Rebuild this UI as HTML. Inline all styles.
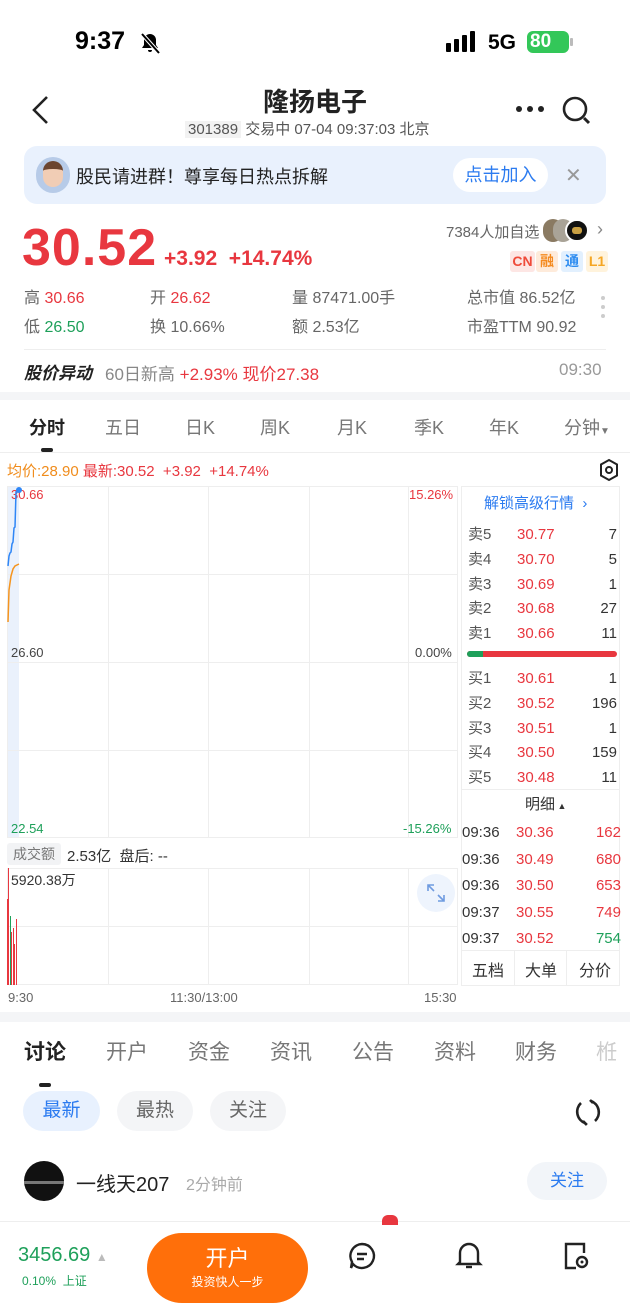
<!DOCTYPE html>
<html><head><meta charset="utf-8"><style>
*{margin:0;padding:0;box-sizing:border-box}
body{width:630px;height:1280px;overflow:hidden;background:#fff;font-family:"Liberation Sans","Noto Sans CJK SC",sans-serif;color:#222;position:relative}
.a{position:absolute;white-space:nowrap}
.r{color:#e8373f}.g{color:#1ea05a}.gy{color:#666}.lg{color:#999}
.hl{position:absolute;height:1px;background:#eee}
.vl{position:absolute;width:1px;background:#eee}
</style></head><body>
<!-- status bar -->
<div class="a" style="left:75px;top:27px;font-size:25px;font-weight:bold;color:#000">9:37</div>
<svg class="a" style="left:138px;top:31px" width="24" height="24" viewBox="0 0 24 24"><path d="M12 3a6 6 0 0 0-6 6v5l-2 3h16l-2-3V9a6 6 0 0 0-6-6z" fill="#000"/><path d="M10 19a2 2 0 0 0 4 0" fill="#000"/><path d="M4 3l17 19" stroke="#fff" stroke-width="4"/><path d="M4 3l17 19" stroke="#000" stroke-width="2"/></svg>
<div class="a" style="left:446px;top:43px;width:5px;height:9px;background:#000;border-radius:1px"></div>
<div class="a" style="left:454px;top:39px;width:5px;height:13px;background:#000;border-radius:1px"></div>
<div class="a" style="left:462px;top:35px;width:5px;height:17px;background:#000;border-radius:1px"></div>
<div class="a" style="left:470px;top:31px;width:5px;height:21px;background:#000;border-radius:1px"></div>
<div class="a" style="left:488px;top:31px;font-size:21px;font-weight:bold;color:#000">5G</div>
<div class="a" style="left:527px;top:31px;width:42px;height:22px;background:#33c759;border-radius:6px;color:#fff;font-weight:bold;font-size:19px;line-height:22px;padding-left:3px">80</div>
<div class="a" style="left:570px;top:38px;width:3px;height:8px;background:#bbb;border-radius:1px"></div>
<!-- nav -->
<svg class="a" style="left:28px;top:95px" width="24" height="30" viewBox="0 0 24 30"><path d="M19 2L6 15l13 13" stroke="#222" stroke-width="2.6" fill="none"/></svg>
<div class="a" style="left:0;width:630px;top:82px;text-align:center;font-size:26px;font-weight:bold;color:#222">隆扬电子</div>
<div class="a" style="left:185px;top:118px;font-size:15px;color:#555"><span style="background:#f2f2f2;padding:0 3px">301389</span> 交易中 07-04 09:37:03 北京</div>
<div class="a" style="left:516px;top:106px;width:6px;height:6px;border-radius:3px;background:#222;box-shadow:11px 0 #222,22px 0 #222"></div>
<svg class="a" style="left:561px;top:95px" width="32" height="32" viewBox="0 0 32 32"><circle cx="14" cy="14" r="11" stroke="#222" stroke-width="2.6" fill="none"/><path d="M23 23l5 5" stroke="#222" stroke-width="3"/></svg>
<!-- banner -->
<div class="a" style="left:24px;top:146px;width:582px;height:58px;background:#e9f1fd;border-radius:13px"></div>
<div class="a" style="left:36px;top:157px;width:34px;height:36px;border-radius:17px;background:#b7cbe8;overflow:hidden"><div style="margin:4px 7px;width:20px;height:26px;border-radius:10px;background:#f1cdb5;border-top:8px solid #6b4530"></div></div>
<div class="a" style="left:76px;top:163px;font-size:18px;color:#222">股民请进群！尊享每日热点拆解</div>
<div class="a" style="left:453px;top:158px;width:95px;height:34px;border-radius:17px;background:#fff;color:#2b7bf0;font-size:18px;line-height:34px;text-align:center">点击加入</div>
<div class="a" style="left:565px;top:163px;font-size:20px;color:#999">✕</div>
<!-- price -->
<div class="a r" style="left:22px;top:218px;font-size:52px;font-weight:bold;letter-spacing:1px">30.52</div>
<div class="a r" style="left:164px;top:247px;font-size:21px;font-weight:bold">+3.92 &nbsp;+14.74%</div>
<div class="a gy" style="left:446px;top:221px;font-size:15px">7384人加自选</div>
<div class="a" style="left:543px;top:219px;width:20px;height:23px;border-radius:11px;background:#8a7a62"></div>
<div class="a" style="left:553px;top:219px;width:20px;height:23px;border-radius:11px;background:#a9a397"></div>
<div class="a" style="left:565px;top:219px;width:24px;height:23px;border-radius:12px;background:#111;border:2px solid #fff"><div style="margin:6px auto;width:10px;height:7px;background:#c9a043;border-radius:3px"></div></div>
<div class="a" style="left:597px;top:219px;font-size:18px;color:#888">›</div>
<div class="a" style="left:510px;top:251px;width:25px;height:21px;background:#fde6e4;color:#ef4b3a;font-size:14px;font-weight:bold;text-align:center;line-height:21px;border-radius:3px">CN</div>
<div class="a" style="left:536px;top:251px;width:22px;height:21px;background:#feebdb;color:#f48a1f;font-size:14px;font-weight:bold;text-align:center;line-height:21px;border-radius:3px">融</div>
<div class="a" style="left:561px;top:251px;width:22px;height:21px;background:#e2f0fe;color:#2d8cf0;font-size:14px;font-weight:bold;text-align:center;line-height:21px;border-radius:3px">通</div>
<div class="a" style="left:586px;top:251px;width:22px;height:21px;background:#fff3dc;color:#f5a623;font-size:14px;font-weight:bold;text-align:center;line-height:21px;border-radius:3px">L1</div>
<div class="a" style="left:24px;top:284px;font-size:16px;line-height:29px;color:#666">高 <span class="r">30.66</span><br>低 <span class="g">26.50</span></div>
<div class="a" style="left:150px;top:284px;font-size:16px;line-height:29px;color:#666">开 <span class="r">26.62</span><br>换 10.66%</div>
<div class="a" style="left:292px;top:284px;font-size:16px;line-height:29px;color:#666">量 87471.00手<br>额 2.53亿</div>
<div class="a" style="left:467px;top:284px;font-size:16px;line-height:29px;color:#666">总市值 86.52亿<br>市盈TTM 90.92</div>
<div class="a" style="left:601px;top:296px;width:4px;height:4px;border-radius:2px;background:#ccc;box-shadow:0 9px #ccc,0 18px #ccc"></div>
<div class="hl" style="left:24px;top:349px;width:582px"></div>
<div class="a" style="left:24px;top:359px;font-size:17px;font-weight:bold;font-style:italic;color:#222">股价异动</div>
<div class="a" style="left:105px;top:360px;font-size:17px;color:#888">60日新高 <span class="r">+2.93% 现价27.38</span></div>
<div class="a lg" style="left:559px;top:360px;font-size:17px">09:30</div>
<div class="a" style="left:0;top:392px;width:630px;height:8px;background:#f4f5f7"></div>
<!-- chart tabs -->
<div class="a" style="top:414px;left:0;width:630px;font-size:18px;color:#777">
<span class="a" style="left:29px;color:#222;font-weight:bold">分时</span><span class="a" style="left:105px">五日</span><span class="a" style="left:185px">日K</span><span class="a" style="left:260px">周K</span><span class="a" style="left:337px">月K</span><span class="a" style="left:414px">季K</span><span class="a" style="left:489px">年K</span><span class="a" style="left:564px">分钟<span style="font-size:10px">▼</span></span></div>
<div class="a" style="left:41px;top:448px;width:12px;height:4px;border-radius:2px;background:#222"></div>
<div class="hl" style="left:0;top:452px;width:630px"></div>
<div class="a" style="left:7px;top:460px;font-size:15px"><span style="color:#f08c1c">均价:28.90</span> <span class="r">最新:30.52 &nbsp;+3.92 &nbsp;+14.74%</span></div>
<svg class="a" style="left:598px;top:458px" width="22" height="24" viewBox="0 0 22 24"><path d="M11 2l8 4.5v11L11 22l-8-4.5v-11z" stroke="#222" stroke-width="2" fill="none"/><circle cx="11" cy="12" r="3" stroke="#222" stroke-width="2" fill="none"/></svg>
<!-- chart -->
<div class="a" style="left:7px;top:486px;width:451px;height:352px;border:1px solid #eee"></div>
<div class="a" style="left:8px;top:487px;width:11px;height:350px;background:#eaf1fc"></div>
<div class="vl" style="left:108px;top:486px;height:352px"></div>
<div class="vl" style="left:208px;top:486px;height:352px"></div>
<div class="vl" style="left:309px;top:486px;height:352px"></div>
<div class="vl" style="left:408px;top:486px;height:352px"></div>
<div class="hl" style="left:7px;top:574px;width:451px"></div>
<div class="hl" style="left:7px;top:662px;width:451px"></div>
<div class="hl" style="left:7px;top:750px;width:451px"></div>
<div class="a r" style="left:11px;top:487px;font-size:13px">30.66</div>
<svg class="a" style="left:0;top:480px" width="30" height="150"><path d="M8 86 L9 76 L10 73 L11 72 L12 64 L13 62 L14 48 L15 47 L16 12 L17 12 L18 9 L19 9" stroke="#2f86f6" stroke-width="1.5" fill="none"/><path d="M8 142 L9 110 L11 96 L13 89 L15 86 L19 84" stroke="#f5941e" stroke-width="1.5" fill="none"/><circle cx="19" cy="10" r="3" fill="#2f86f6"/></svg>
<div class="a r" style="left:409px;top:487px;font-size:13px">15.26%</div>
<div class="a" style="left:11px;top:645px;font-size:13px;color:#444">26.60</div>
<div class="a" style="left:415px;top:645px;font-size:13px;color:#444">0.00%</div>
<div class="a g" style="left:11px;top:821px;font-size:13px">22.54</div>
<div class="a g" style="left:403px;top:821px;font-size:13px">-15.26%</div>
<!-- order book -->
<div class="a" style="left:461px;top:486px;width:159px;height:500px;border:1px solid #eee"></div>
<div class="a" style="left:484px;top:492px;font-size:15px;color:#2b7bf0">解锁高级行情 &nbsp;›</div>
<div class="a" style="left:468px;top:523px;font-size:15px;line-height:24.8px;color:#555">卖5<br>卖4<br>卖3<br>卖2<br>卖1</div>
<div class="a r" style="left:517px;top:523px;font-size:15px;line-height:24.8px">30.77<br>30.70<br>30.69<br>30.68<br>30.66</div>
<div class="a" style="left:560px;top:523px;width:57px;text-align:right;font-size:15px;line-height:24.8px;color:#333">7<br>5<br>1<br>27<br>11</div>
<div class="a" style="left:467px;top:651px;width:150px;height:6px;border-radius:3px;background:#e8373f"></div>
<div class="a" style="left:467px;top:651px;width:16px;height:6px;border-radius:3px 0 0 3px;background:#1ea05a"></div>
<div class="a" style="left:468px;top:667px;font-size:15px;line-height:24.8px;color:#555">买1<br>买2<br>买3<br>买4<br>买5</div>
<div class="a r" style="left:517px;top:667px;font-size:15px;line-height:24.8px">30.61<br>30.52<br>30.51<br>30.50<br>30.48</div>
<div class="a" style="left:560px;top:667px;width:57px;text-align:right;font-size:15px;line-height:24.8px;color:#333">1<br>196<br>1<br>159<br>11</div>
<div class="hl" style="left:461px;top:789px;width:159px"></div>
<div class="a" style="left:525px;top:793px;font-size:15px;color:#333">明细<span style="font-size:9px"> ▲</span></div>
<div class="a" style="left:462px;top:820px;font-size:15px;line-height:26.5px;color:#333">09:36<br>09:36<br>09:36<br>09:37<br>09:37</div>
<div class="a r" style="left:516px;top:820px;font-size:15px;line-height:26.5px">30.36<br>30.49<br>30.50<br>30.55<br>30.52</div>
<div class="a r" style="left:570px;top:820px;width:51px;text-align:right;font-size:15px;line-height:26.5px">162<br>680<br>653<br>749<br><span class="g">754</span></div>
<div class="hl" style="left:461px;top:950px;width:159px"></div>
<div class="vl" style="left:514px;top:950px;height:36px"></div>
<div class="vl" style="left:566px;top:950px;height:36px"></div>
<div class="a" style="left:461px;top:957px;width:159px;font-size:16px;color:#333"><span class="a" style="left:11px">五档</span><span class="a" style="left:64px">大单</span><span class="a" style="left:118px">分价</span></div>
<!-- volume -->
<div class="a" style="left:7px;top:843px;width:54px;height:22px;background:#f2f3f5;border-radius:3px;font-size:14px;color:#777;line-height:22px;text-align:center">成交额</div>
<div class="a" style="left:67px;top:845px;font-size:15px;color:#333">2.53亿 &nbsp;盘后: --</div>
<div class="a" style="left:7px;top:868px;width:451px;height:117px;border:1px solid #eee"></div>
<div class="vl" style="left:108px;top:868px;height:117px"></div>
<div class="vl" style="left:208px;top:868px;height:117px"></div>
<div class="vl" style="left:309px;top:868px;height:117px"></div>
<div class="vl" style="left:408px;top:868px;height:117px"></div>
<div class="hl" style="left:7px;top:926px;width:451px"></div>
<div class="a" style="left:8px;top:868px;width:1px;height:117px;background:#e8373f"></div>
<div class="a" style="left:7px;top:899px;width:1px;height:86px;background:#e8373f"></div>
<div class="a" style="left:10px;top:916px;width:1px;height:69px;background:#1ea05a"></div>
<div class="a" style="left:11px;top:932px;width:1px;height:53px;background:#e8373f"></div>
<div class="a" style="left:13px;top:928px;width:1px;height:57px;background:#e8373f"></div>
<div class="a" style="left:14px;top:944px;width:1px;height:41px;background:#e8373f"></div>
<div class="a" style="left:16px;top:919px;width:1px;height:66px;background:#e8373f"></div>
<div class="a" style="left:11px;top:870px;font-size:14px;color:#333">5920.38万</div>
<div class="a" style="left:417px;top:874px;width:38px;height:38px;border-radius:19px;background:#eef4fd"></div>
<svg class="a" style="left:424px;top:881px" width="24" height="24" viewBox="0 0 24 24"><path d="M4 10V4h6M4 4l6 6M20 14v6h-6M20 20l-6-6" stroke="#6f9be0" stroke-width="1.6" fill="none"/></svg>
<div class="a gy" style="left:8px;top:990px;font-size:13px">9:30</div>
<div class="a gy" style="left:170px;top:990px;font-size:13px">11:30/13:00</div>
<div class="a gy" style="left:424px;top:990px;font-size:13px">15:30</div>
<div class="a" style="left:0;top:1012px;width:630px;height:10px;background:#f4f5f7"></div>
<!-- discussion -->
<div class="a" style="top:1036px;left:0;width:630px;font-size:21px;color:#777">
<span class="a" style="left:24px;color:#222;font-weight:bold">讨论</span><span class="a" style="left:106px">开户</span><span class="a" style="left:188px">资金</span><span class="a" style="left:270px">资讯</span><span class="a" style="left:352px">公告</span><span class="a" style="left:434px">资料</span><span class="a" style="left:515px">财务</span><span class="a" style="left:596px;color:#ccc">栣</span></div>
<div class="a" style="left:39px;top:1083px;width:12px;height:4px;border-radius:2px;background:#222"></div>
<div class="a" style="left:23px;top:1091px;width:77px;height:40px;border-radius:20px;background:#e8f1fe;color:#2b7bf0;font-size:19px;line-height:40px;text-align:center">最新</div>
<div class="a" style="left:117px;top:1091px;width:76px;height:40px;border-radius:20px;background:#f4f5f7;color:#666;font-size:19px;line-height:40px;text-align:center">最热</div>
<div class="a" style="left:210px;top:1091px;width:76px;height:40px;border-radius:20px;background:#f4f5f7;color:#666;font-size:19px;line-height:40px;text-align:center">关注</div>
<svg class="a" style="left:572px;top:1096px" width="32" height="32" viewBox="0 0 32 32"><path d="M9 7A12 12 0 0 0 13 27M23 25A12 12 0 0 0 19 5" stroke="#222" stroke-width="2.6" fill="none"/><path d="M11 25l3 3-1 1M21 7l-3-3" stroke="#222" stroke-width="2.6" fill="none"/></svg>
<div class="a" style="left:24px;top:1161px;width:40px;height:40px;border-radius:20px;background:#111"><div style="margin-top:20px;height:3px;background:#777"></div></div>
<div class="a" style="left:76px;top:1168px;font-size:20px;color:#222">一线天207</div>
<div class="a lg" style="left:186px;top:1171px;font-size:16px;color:#aaa">2分钟前</div>
<div class="a" style="left:527px;top:1162px;width:80px;height:38px;border-radius:19px;background:#f2f5f9;color:#2b7bf0;font-size:17px;line-height:38px;text-align:center">关注</div>
<!-- bottom bar -->
<div class="hl" style="left:0;top:1221px;width:630px"></div>
<div class="a" style="left:382px;top:1215px;width:16px;height:10px;border-radius:6px 6px 0 0;background:#e8373f"></div>
<div class="a g" style="left:18px;top:1244px;font-size:20px">3456.69 <span style="color:#bbb;font-size:12px">▲</span></div>
<div class="a g" style="left:22px;top:1272px;font-size:12px">0.10% &nbsp;上证</div>
<div class="a" style="left:147px;top:1233px;width:161px;height:70px;border-radius:35px;background:#ff6f0a;color:#fff;text-align:center"><div style="font-size:22px;margin-top:8px">开户</div><div style="font-size:12px">投资快人一步</div></div>
<svg class="a" style="left:347px;top:1241px" width="30" height="30" viewBox="0 0 30 30"><path d="M15 3a12 12 0 1 1-9 20l-2 4 1-6A12 12 0 0 1 15 3z" stroke="#222" stroke-width="2.4" fill="none"/><path d="M10 13h10M10 18h7" stroke="#222" stroke-width="2.4"/></svg>
<svg class="a" style="left:454px;top:1240px" width="30" height="32" viewBox="0 0 30 32"><path d="M6 22V13a9 9 0 0 1 18 0v9l2 2H4z" stroke="#222" stroke-width="2.4" fill="none"/><path d="M12 27h6" stroke="#222" stroke-width="2.4"/></svg>
<svg class="a" style="left:560px;top:1240px" width="32" height="32" viewBox="0 0 32 32"><path d="M24 13V4H6v24h10" stroke="#222" stroke-width="2.4" fill="none"/><circle cx="22" cy="22" r="5" stroke="#222" stroke-width="2.4" fill="none"/><circle cx="22" cy="22" r="1.5" fill="#222"/></svg>
</body></html>
